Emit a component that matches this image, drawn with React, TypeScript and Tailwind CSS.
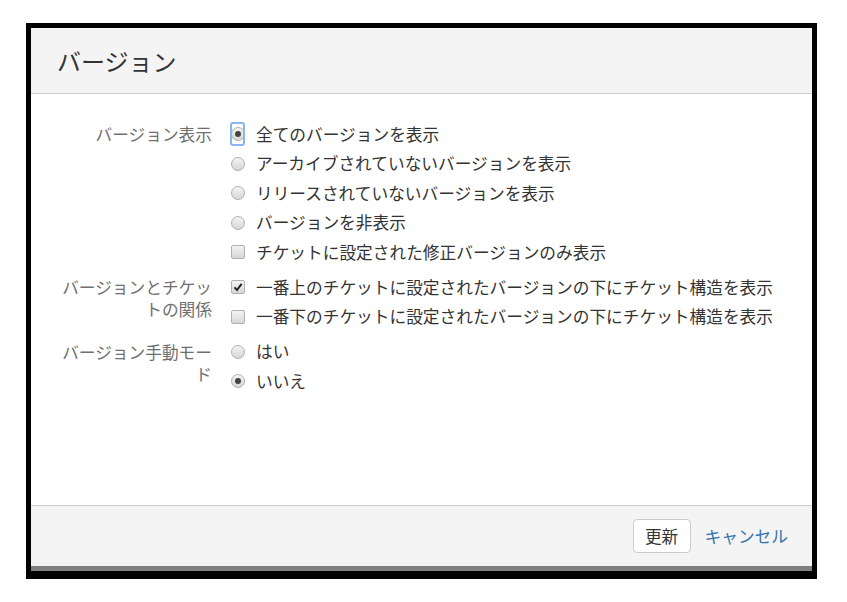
import { Fragment } from "react";

type Option = {
  text: string;
  kind: "radio" | "checkbox";
  checked?: boolean;
  focused?: boolean;
};

type Group = {
  label: string[];
  options: Option[];
};

const groups: Group[] = [
  {
    label: ["バージョン表示"],
    options: [
      { text: "全てのバージョンを表示", kind: "radio", checked: true, focused: true },
      { text: "アーカイブされていないバージョンを表示", kind: "radio" },
      { text: "リリースされていないバージョンを表示", kind: "radio" },
      { text: "バージョンを非表示", kind: "radio" },
      { text: "チケットに設定された修正バージョンのみ表示", kind: "checkbox" },
    ],
  },
  {
    label: ["バージョンとチケッ", "トの関係"],
    options: [
      { text: "一番上のチケットに設定されたバージョンの下にチケット構造を表示", kind: "checkbox", checked: true },
      { text: "一番下のチケットに設定されたバージョンの下にチケット構造を表示", kind: "checkbox" },
    ],
  },
  {
    label: ["バージョン手動モー", "ド"],
    options: [
      { text: "はい", kind: "radio" },
      { text: "いいえ", kind: "radio", checked: true },
    ],
  },
];

function Radio({ checked }: { checked?: boolean }) {
  return (
    <span className="grid h-[14px] w-[14px] place-items-center rounded-full border border-[#b0b0b0] bg-gradient-to-b from-[#f4f4f4] to-[#d6d6d6]">
      {checked && <span className="h-[6px] w-[6px] rounded-full bg-[#444444]" />}
    </span>
  );
}

function Checkbox({ checked }: { checked?: boolean }) {
  return (
    <span className="grid h-[14px] w-[14px] place-items-center rounded-[2px] border border-[#b0b0b0] bg-gradient-to-b from-[#f4f4f4] to-[#d6d6d6]">
      {checked && (
        <svg viewBox="0 0 10 10" className="h-[10px] w-[10px]">
          <path d="M1.5 5.4 L4 8 L8.6 1.8" fill="none" stroke="#222" strokeWidth="2" />
        </svg>
      )}
    </span>
  );
}

export default function App() {
  return (
    <div
      className="h-[602px] w-[847px] bg-white pl-[26px] pt-[23px]"
      style={{ fontFamily: '"Noto Sans CJK JP", "Noto Sans", sans-serif' }}
    >
      <div className="w-[791px] bg-black px-[5px] pb-[8px] pt-[5px]">
        <div className="flex h-[538px] flex-col bg-white">
          <div className="flex h-[66px] items-center border-b border-[#cccccc] bg-[#f4f4f4] pl-[26px]">
            <h1 className="text-[24px] leading-none text-[#333333]">バージョン</h1>
          </div>

          <div className="flex-1 pt-[25.5px]">
            {groups.map((group, gi) => (
              <div key={gi} className="mb-[5.5px] flex">
                <div className="w-[181px] pt-[3.5px] text-right text-[16.7px] leading-[22px] text-[#707070]">
                  {group.label.map((line, li) => (
                    <Fragment key={li}>
                      {line}
                      {li < group.label.length - 1 && <br />}
                    </Fragment>
                  ))}
                </div>
                <div className="ml-[18px] flex flex-col">
                  {group.options.map((opt, oi) => (
                    <div key={oi} className="flex h-[29.5px] items-center">
                      <span className="relative grid w-[15px] place-items-center">
                        {opt.focused && (
                          <span className="absolute left-0 top-1/2 h-[24px] w-[15px] -translate-y-1/2 rounded-[3px] border-2 border-[#8ab4f0]" />
                        )}
                        {opt.kind === "radio" ? <Radio checked={opt.checked} /> : <Checkbox checked={opt.checked} />}
                      </span>
                      <span className="ml-[11px] whitespace-nowrap text-[16.7px] leading-none text-[#333333]">
                        {opt.text}
                      </span>
                    </div>
                  ))}
                </div>
              </div>
            ))}
          </div>

          <div className="flex h-[61px] items-center justify-end gap-[14px] border-t border-[#cccccc] bg-[#f4f4f4] pr-[24px]">
            <button
              type="button"
              className="h-[34px] w-[58px] rounded-[4px] border border-[#cccccc] bg-white text-[16.7px] leading-none text-[#333333]"
            >
              更新
            </button>
            <span className="text-[16.7px] leading-none text-[#3572b0]">キャンセル</span>
          </div>
        </div>
        <div className="h-[5px] bg-[#808080]" />
      </div>
    </div>
  );
}
